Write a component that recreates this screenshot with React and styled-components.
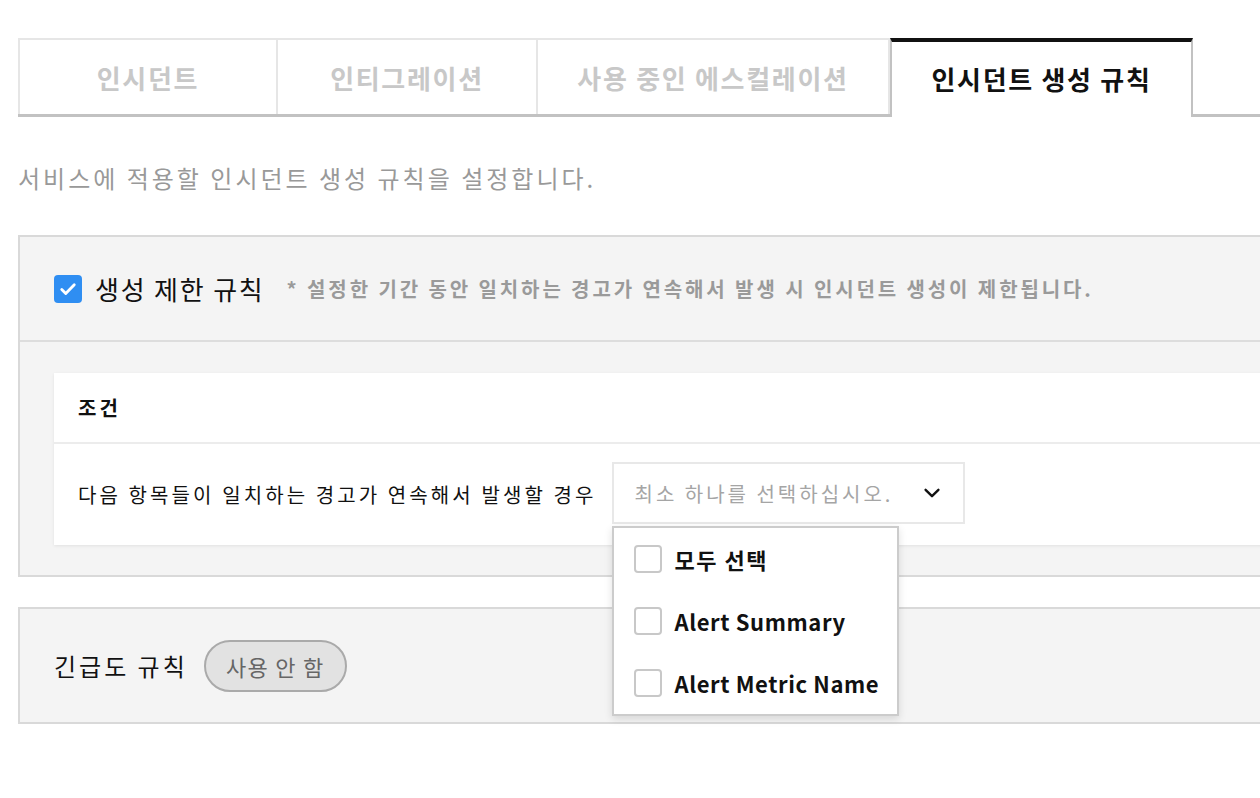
import React from 'react';
import styled, { createGlobalStyle } from 'styled-components';

const GlobalStyle = createGlobalStyle`
  html, body {
    margin: 0;
    padding: 0;
    background: #ffffff;
    overflow: hidden;
  }
  body {
    font-family: "Noto Sans CJK KR", "Noto Sans", sans-serif;
    color: #111;
  }
`;

const Page = styled.div`
  width: 1300px;
  padding: 38px 0 0 18px;
  box-sizing: border-box;
`;

const TabBar = styled.div`
  display: flex;
  height: 79px;
  border-bottom: 3px solid #c2c2c2;
  box-sizing: border-box;
`;

const Tab = styled.div`
  display: flex;
  align-items: center;
  justify-content: center;
  width: ${(p) => p.width}px;
  box-sizing: border-box;
  font-size: 26px;
  font-weight: 700;
  letter-spacing: 1.7px;
  color: ${(p) => (p.active ? '#111' : '#c8c8c8')};
  background: #fff;
  border: 2px solid #e6e6e6;
  border-bottom: none;
  border-left-width: ${(p) => (p.first ? 2 : 0)}px;
  ${(p) =>
    p.active &&
    `
    border: 2px solid #c2c2c2;
    border-top: 4px solid #111;
    border-bottom: none;
    margin-bottom: -3px;
    padding-bottom: 3px;
  `}
`;

const Description = styled.p`
  margin: 44px 0 40px;
  font-size: 24px;
  line-height: 34px;
  letter-spacing: 3px;
  color: #999;
`;

const Panel = styled.section`
  background: #f4f4f4;
  border: 2px solid #d9d9d9;
  margin-bottom: 30px;
`;

const PanelHeader = styled.div`
  display: flex;
  align-items: center;
  height: 103px;
  padding-left: 34px;
  border-bottom: 2px solid #dddddd;
`;

const CheckedBox = styled.span`
  display: inline-flex;
  align-items: center;
  justify-content: center;
  width: 28px;
  height: 28px;
  border-radius: 4px;
  background: #2f8ef2;
  margin-right: 13px;
`;

const PanelTitle = styled.span`
  font-size: 26px;
  letter-spacing: 1.8px;
  color: #111;
`;

const Note = styled.span`
  margin-left: 22px;
  font-size: 20px;
  font-weight: 700;
  letter-spacing: 2.9px;
  color: #9a9a9a;
`;

const PanelBody = styled.div`
  padding: 31px 0 30px 34px;
`;

const Card = styled.div`
  background: #fff;
  box-shadow: 0 1px 3px rgba(0, 0, 0, 0.08);
`;

const CardHeader = styled.div`
  display: flex;
  align-items: center;
  height: 69px;
  padding-left: 24px;
  font-size: 20px;
  font-weight: 700;
  letter-spacing: 3px;
  border-bottom: 2px solid #ececec;
`;

const CardRow = styled.div`
  display: flex;
  align-items: center;
  height: 101px;
  padding-left: 24px;
`;

const RowLabel = styled.span`
  font-size: 20px;
  letter-spacing: 3.1px;
  color: #111;
  margin-right: 16px;
`;

const SelectWrap = styled.div`
  position: relative;
  align-self: flex-start;
  margin-top: 18px;
`;

const Select = styled.div`
  display: flex;
  align-items: center;
  justify-content: space-between;
  width: 353px;
  height: 62px;
  box-sizing: border-box;
  padding: 0 20px 0 20px;
  border: 2px solid #e8e8e8;
  font-size: 20px;
  letter-spacing: 3px;
  color: #a5a5a5;
`;

const Menu = styled.div`
  position: absolute;
  top: 64px;
  left: 0;
  width: 287px;
  box-sizing: border-box;
  background: #fff;
  border: 2px solid #cccccc;
  box-shadow: 0 3px 8px rgba(0, 0, 0, 0.12);
  z-index: 10;
`;

const MenuItem = styled.div`
  display: flex;
  align-items: center;
  height: 62px;
  padding-left: 20px;
  font-size: 22px;
  font-weight: 700;
  letter-spacing: ${(p) => (p.latin ? 0.6 : 1.5)}px;
  color: #111;
`;

const EmptyBox = styled.span`
  width: 28px;
  height: 28px;
  box-sizing: border-box;
  border: 2px solid #c8c8c8;
  border-radius: 4px;
  margin-right: 12px;
  background: #fff;
`;

const SimpleHeader = styled.div`
  display: flex;
  align-items: center;
  height: 113px;
  padding-left: 34px;
`;

const SubTitle = styled.span`
  font-size: 24px;
  letter-spacing: 3px;
  color: #111;
`;

const Pill = styled.span`
  display: inline-flex;
  align-items: center;
  justify-content: center;
  margin-left: 16px;
  width: 143px;
  height: 52px;
  box-sizing: border-box;
  border-radius: 26px;
  border: 2px solid #aaaaaa;
  background: #e2e2e2;
  font-size: 22px;
  letter-spacing: 1.3px;
  color: #666;
`;

const tabs = [
  { label: '인시던트', width: 260 },
  { label: '인티그레이션', width: 260 },
  { label: '사용 중인 에스컬레이션', width: 352 },
  { label: '인시던트 생성 규칙', width: 303, active: true },
];

const options = [
  { label: '모두 선택' },
  { label: 'Alert Summary', latin: true },
  { label: 'Alert Metric Name', latin: true },
];

const App = () => (
  <>
    <GlobalStyle />
    <Page>
      <TabBar>
        {tabs.map((t, i) => (
          <Tab key={t.label} width={t.width} active={t.active} first={i === 0}>
            {t.label}
          </Tab>
        ))}
      </TabBar>

      <Description>서비스에 적용할 인시던트 생성 규칙을 설정합니다.</Description>

      <Panel>
        <PanelHeader>
          <CheckedBox>
            <svg width="20" height="20" viewBox="0 0 24 24" fill="none">
              <path d="M4.5 12.5l4.8 4.8L19.5 7" stroke="#fff" strokeWidth="3.4" strokeLinecap="round" strokeLinejoin="round" />
            </svg>
          </CheckedBox>
          <PanelTitle>생성 제한 규칙</PanelTitle>
          <Note>* 설정한 기간 동안 일치하는 경고가 연속해서 발생 시 인시던트 생성이 제한됩니다.</Note>
        </PanelHeader>
        <PanelBody>
          <Card>
            <CardHeader>조건</CardHeader>
            <CardRow>
              <RowLabel>다음 항목들이 일치하는 경고가 연속해서 발생할 경우</RowLabel>
              <SelectWrap>
                <Select>
                  최소 하나를 선택하십시오.
                  <svg width="22" height="22" viewBox="0 0 24 24" fill="none">
                    <path d="M5 8.5l7 7 7-7" stroke="#111" strokeWidth="2.6" strokeLinecap="round" strokeLinejoin="round" />
                  </svg>
                </Select>
                <Menu>
                  {options.map((o) => (
                    <MenuItem key={o.label} latin={o.latin}>
                      <EmptyBox />
                      {o.label}
                    </MenuItem>
                  ))}
                </Menu>
              </SelectWrap>
            </CardRow>
          </Card>
        </PanelBody>
      </Panel>

      <Panel>
        <SimpleHeader>
          <SubTitle>긴급도 규칙</SubTitle>
          <Pill>사용 안 함</Pill>
        </SimpleHeader>
      </Panel>
    </Page>
  </>
);

export default App;
